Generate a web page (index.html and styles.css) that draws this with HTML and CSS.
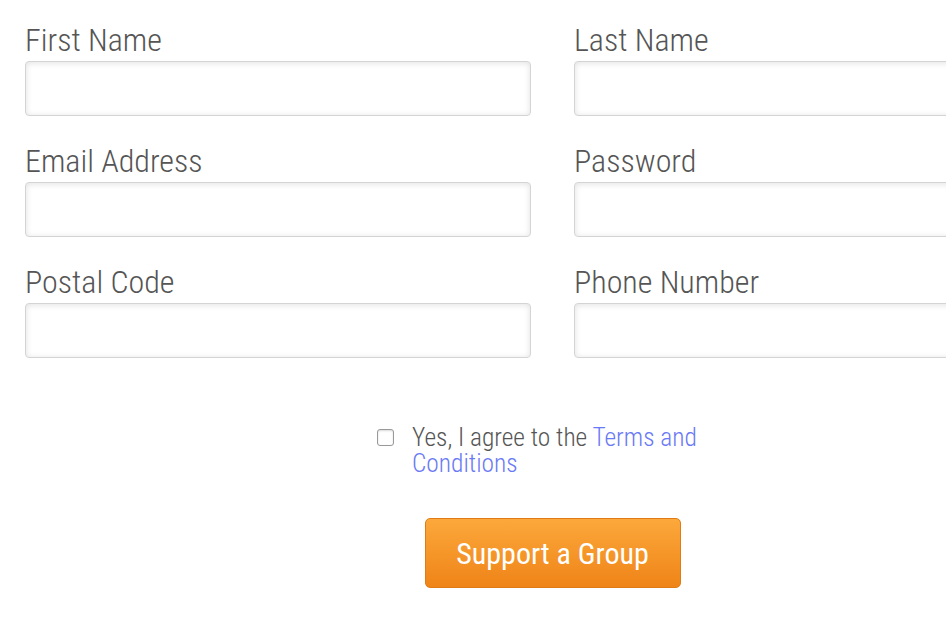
FILE: index.html
```html
<!DOCTYPE html>
<html>
<head>
<meta charset="utf-8">
<link rel="stylesheet" href="styles.css">
</head>
<body>
<form class="form">
  <div class="grid">
    <div class="field"><label class="label">First Name</label><input class="input" type="text"></div>
    <div class="field"><label class="label">Last Name</label><input class="input" type="text"></div>
    <div class="field"><label class="label">Email Address</label><input class="input" type="text"></div>
    <div class="field"><label class="label">Password</label><input class="input" type="password"></div>
    <div class="field"><label class="label">Postal Code</label><input class="input" type="text"></div>
    <div class="field"><label class="label">Phone Number</label><input class="input" type="text"></div>
  </div>
  <div class="agree">
    <span class="box"></span>
    <span class="agree-text">Yes, I agree to the <a class="link" href="#">Terms and Conditions</a></span>
  </div>
  <div class="actions">
    <button class="btn" type="button">Support a Group</button>
  </div>
</form>
</body>
</html>
```
FILE: styles.css
```css
html, body {
  margin: 0;
  padding: 0;
  background: #fff;
  overflow: hidden;
}
body {
  font-family: "Roboto Condensed", "Roboto", "Liberation Sans", sans-serif;
  font-stretch: condensed;
  color: #555;
}
.form {
  width: 1055px;
  margin-left: 25px;
  padding-top: 22px;
}
.grid {
  display: grid;
  grid-template-columns: 506px 506px;
  column-gap: 43px;
  row-gap: 27px;
}
.field {
  display: flex;
  flex-direction: column;
}
.label {
  font-size: 32px;
  font-weight: 300;
  line-height: 36px;
  color: #555;
  margin-bottom: 3px;
}
.input {
  box-sizing: border-box;
  height: 55px;
  width: 100%;
  border: 1px solid #d4d4d4;
  border-radius: 4px;
  box-shadow: inset 0 1px 6px rgba(0,0,0,0.12);
  background: #fff;
  outline: none;
}
.agree {
  width: 351px;
  margin: 66px auto 0;
  display: flex;
  align-items: flex-start;
}
.box {
  flex: none;
  width: 15px;
  height: 15px;
  border: 1px solid #999;
  border-radius: 3px;
  margin: 5px 18px 0 0;
  box-shadow: inset 0 1px 2px rgba(0,0,0,0.15);
}
.agree-text {
  font-size: 25.4px;
  font-weight: 300;
  line-height: 26px;
  color: #555;
  width: 300px;
}
.link {
  color: #6a79f6;
  text-decoration: none;
}
.actions {
  display: flex;
  justify-content: center;
  margin-top: 42px;
}
.btn {
  width: 256px;
  height: 70px;
  border: 1px solid #e07c16;
  border-radius: 5px;
  background: linear-gradient(#fca83b, #ef8418);
  color: #fff;
  font-family: "Roboto Condensed", "Roboto", sans-serif;
  font-stretch: condensed;
  font-size: 30px;
  font-weight: 400;
  cursor: pointer;
}
```
